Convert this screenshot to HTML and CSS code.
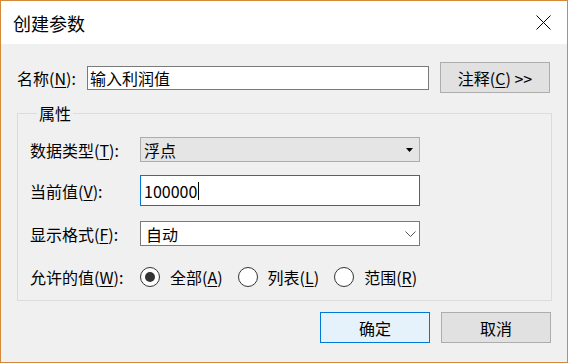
FILE: index.html
```html
<!DOCTYPE html>
<html lang="zh-CN">
    <head>
        <meta charset="utf-8"/>
        <title>创建参数</title>
        <link rel="stylesheet" href="styles.css">
    </head>
    <body>
        <div class="dialog">

            <header class="titlebar">
                <span class="title">创建参数</span>
                <svg class="close" width="15" height="15" viewBox="0 0 15 15">
                    <path d="M0.5 0.5 L14.5 14.5 M14.5 0.5 L0.5 14.5" stroke="#000" stroke-width="1" fill="none"/>
                </svg>
            </header>

            <main class="content">

                <section class="name-row">
                    <label class="name-label">名称(<u>N</u>):</label>
                    <div class="textbox name-box">输入利润值</div>
                    <div class="btn">注释(<u>C</u>) &gt;&gt;</div>
                </section>

                <fieldset class="group">
                    <legend>属性</legend>

                    <div class="field field-type">
                        <label>数据类型(<u>T</u>):</label>
                        <div class="combo combo-list">
                            <span>浮点</span>
                            <svg width="7" height="4" viewBox="0 0 7 4"><path d="M0 0 H7 L3.5 4 Z" fill="#000"/></svg>
                        </div>
                    </div>

                    <div class="field field-value">
                        <label>当前值(<u>V</u>):</label>
                        <div class="textbox value-box focused">100000<span class="caret"></span></div>
                    </div>

                    <div class="field field-format">
                        <label>显示格式(<u>F</u>):</label>
                        <div class="combo combo-edit">
                            <span>自动</span>
                            <svg width="11" height="6" viewBox="0 0 11 6"><path d="M0.5 0.5 L5.5 5.5 L10.5 0.5" stroke="#555" stroke-width="1" fill="none"/></svg>
                        </div>
                    </div>

                    <div class="field field-allowed">
                        <label>允许的值(<u>W</u>):</label>
                        <div class="radios">
                            <span class="radio checked"></span><span class="radio-label">全部(<u>A</u>)</span>
                            <span class="radio"></span><span class="radio-label">列表(<u>L</u>)</span>
                            <span class="radio"></span><span class="radio-label">范围(<u>R</u>)</span>
                        </div>
                    </div>
                </fieldset>

                <section class="actions">
                    <div class="btn btn-default">确定</div>
                    <div class="btn">取消</div>
                </section>

            </main>

        </div>
    </body>
</html>
```

FILE: styles.css
```css
* {
    margin: 0;
    padding: 0;
    box-sizing: border-box;
}

body {
    width: 568px;
    height: 363px;

    font-family: "Noto Sans CJK SC", "Noto Sans", sans-serif;
    font-size: 16px;
    line-height: 20px;
    color: #000;
}

u {
    text-underline-offset: 2px;
}

.dialog {
    width: 568px;
    height: 363px;

    border: 1px solid #d4883a;
    background-color: #f0f0f0;

    display: flex;
    flex-direction: column;
}

.titlebar {
    height: 43px;
    padding: 0 16px 0 12px;

    background-color: #fff;

    display: flex;
    justify-content: space-between;
    align-items: center;
}

.titlebar .title {
    font-size: 18px;
    line-height: 22px;
}

.content {
    padding: 18px 16px 0 16px;

    display: flex;
    flex-direction: column;
}

.name-row {
    height: 31px;

    display: flex;
    align-items: center;
}

.name-label {
    width: 70px;
}

.textbox {
    height: 24px;
    padding: 0 2px;

    background-color: #fff;
    border: 1px solid #7a7a7a;

    display: flex;
    align-items: center;
}

.name-box {
    width: 342px;
    margin-right: 11px;
}

.btn {
    width: 110px;
    height: 31px;

    background-color: #e1e1e1;
    border: 1px solid #adadad;

    display: flex;
    justify-content: center;
    align-items: center;
}

.btn-default {
    background-color: #e5f1fb;
    border-color: #0078d7;
}

.group {
    margin-top: 10px;
    margin-right: -1px;
    padding: 14px 12px 13px 12px;

    border: 1px solid #dcdcdc;
}

.group legend {
    margin-left: 7px;
    padding: 0 2px;
    line-height: 20px;
}

.field {
    display: flex;
    align-items: center;
}

.field label {
    width: 110px;
}

.field-type {
    height: 25px;
}

.field-value {
    height: 31px;
    margin-top: 13px;
}

.field-format {
    height: 25px;
    margin-top: 15px;
}

.field-allowed {
    height: 20px;
    margin-top: 21px;
}

.combo {
    width: 280px;
    height: 25px;
    padding: 0 6px 0 3px;

    display: flex;
    justify-content: space-between;
    align-items: center;
}

.combo-list {
    background-color: #e5e5e5;
    border: 1px solid #adadad;
}

.combo-edit {
    padding-left: 5px;
    padding-right: 3px;

    background-color: #fff;
    border: 1px solid #7a7a7a;
}

.value-box {
    width: 280px;
    height: 31px;
    padding-left: 3px;
}

.value-box.focused {
    border-color: #0078d7;
}

.caret {
    width: 1px;
    height: 18px;
    margin-left: 1px;

    background-color: #000;
}

.radios {
    display: flex;
    align-items: center;
}

.radio {
    width: 20px;
    height: 20px;

    background-color: #fff;
    border: 1px solid #333;
    border-radius: 50%;

    display: flex;
    justify-content: center;
    align-items: center;
}

.radio.checked::after {
    content: "";
    width: 10px;
    height: 10px;

    background-color: #333;
    border-radius: 50%;
}

.radio-label {
    margin: 0 15px 0 10px;
}

.actions {
    margin-top: 11px;
    margin-right: 0;

    display: flex;
    justify-content: flex-end;
    gap: 11px;
}
```
